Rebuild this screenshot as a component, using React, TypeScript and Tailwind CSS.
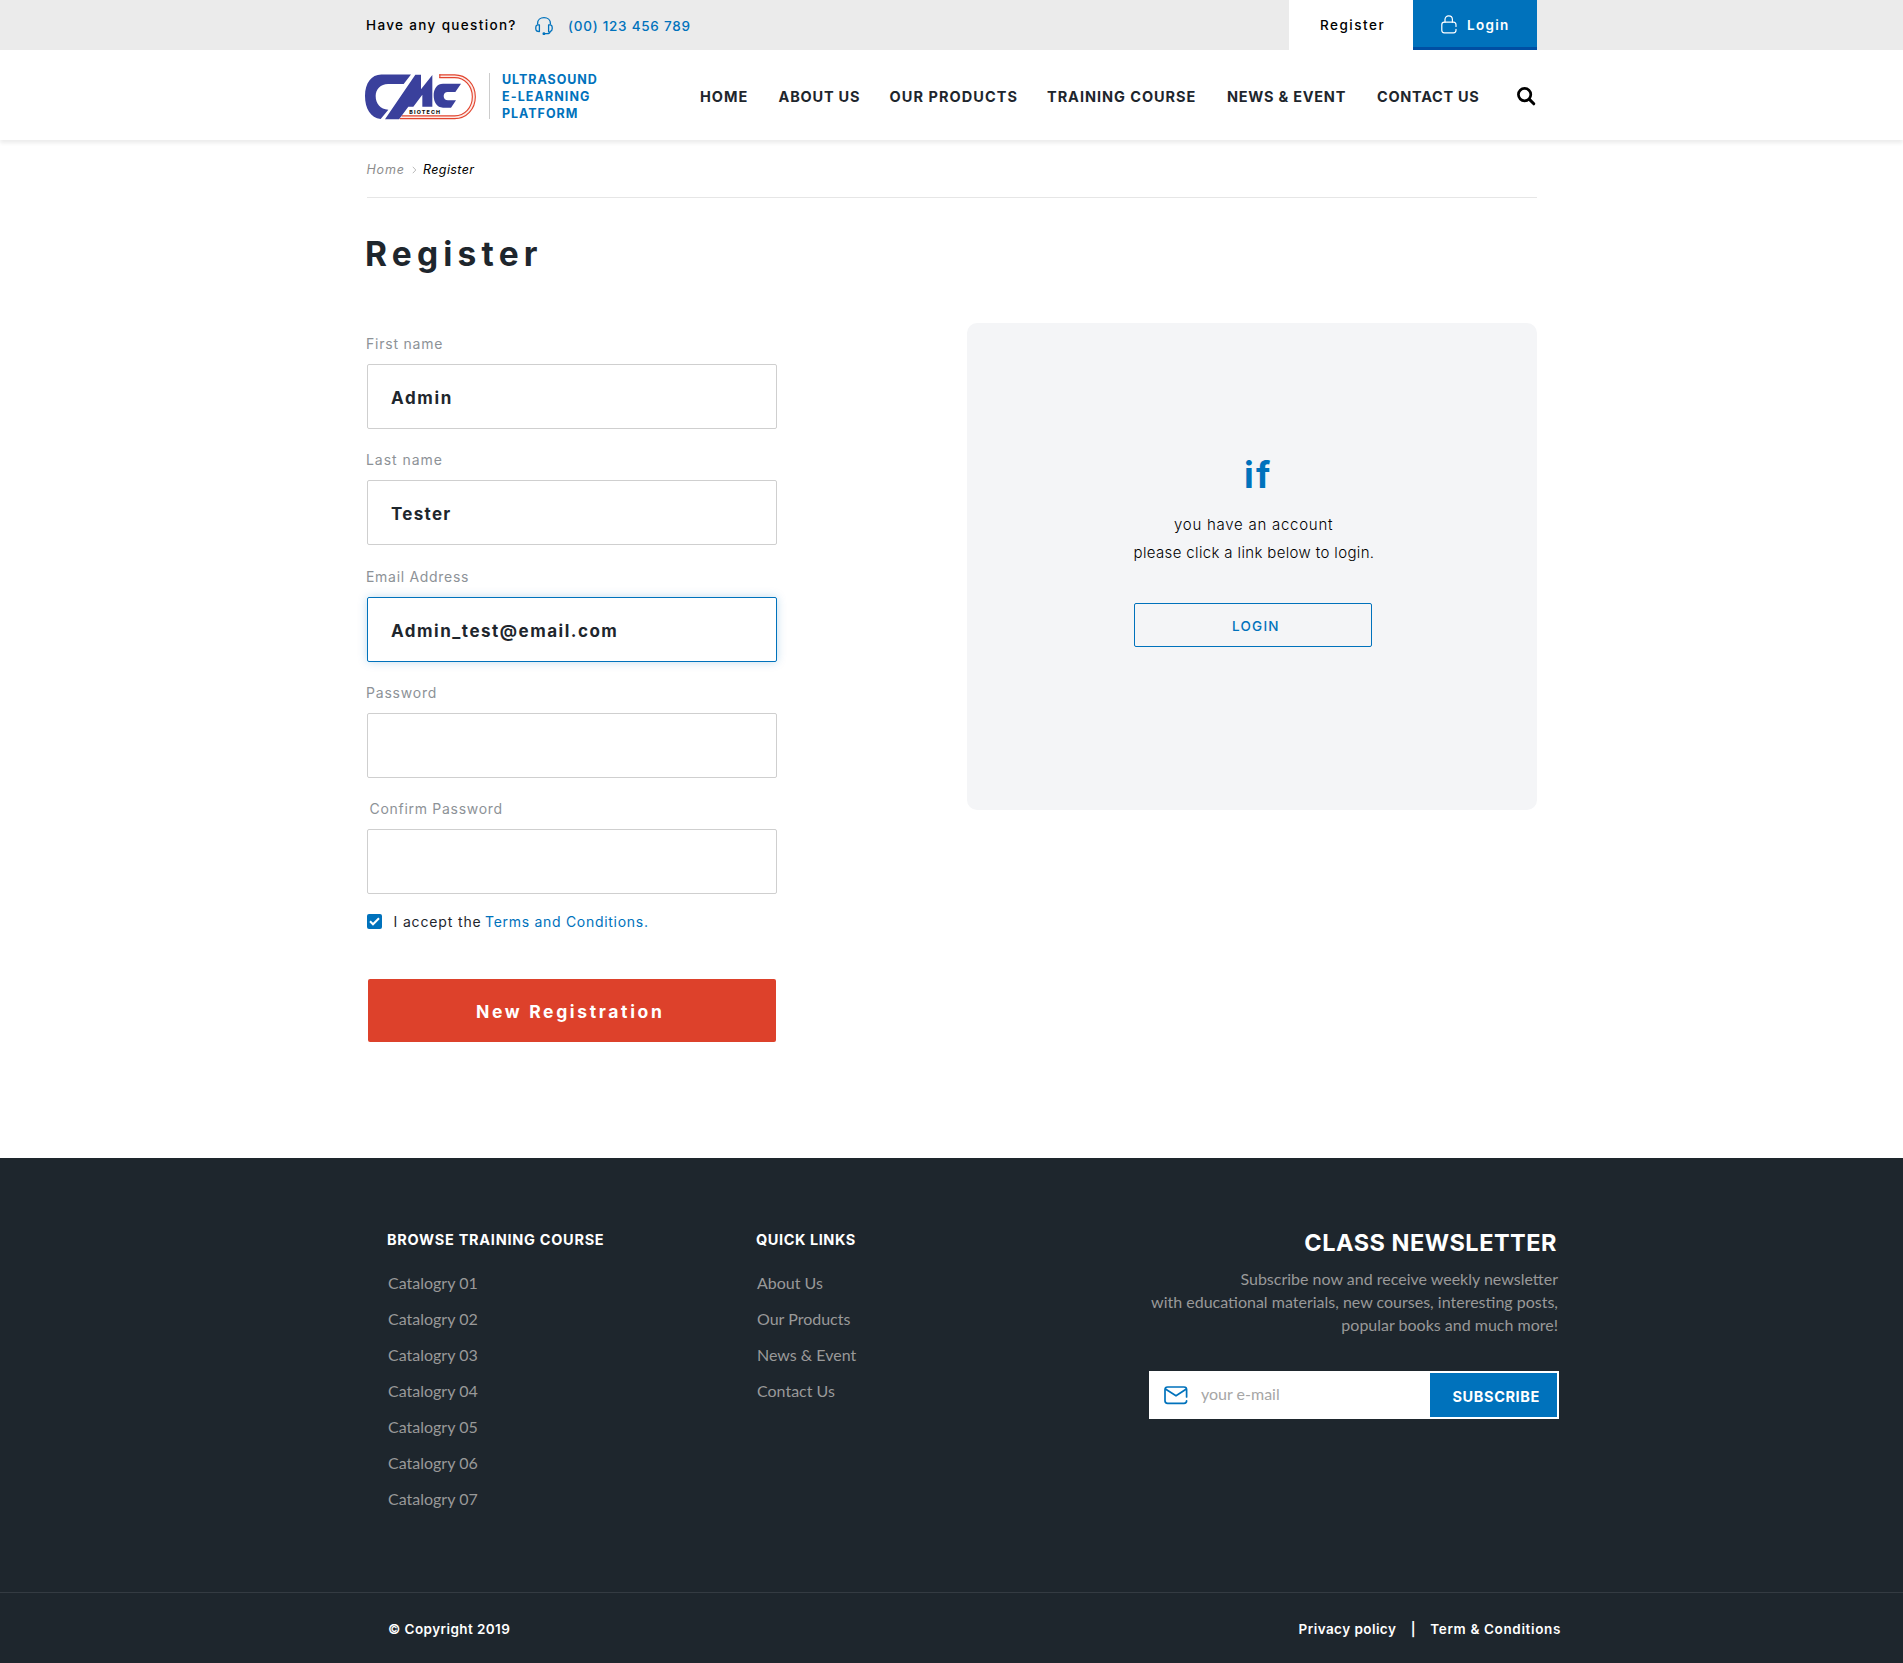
import type { ReactNode } from "react";

const navItems = [
  { label: "HOME", className: "tracking-[1px]" },
  { label: "ABOUT US", className: "tracking-[0.8px]" },
  { label: "OUR PRODUCTS", className: "tracking-[1.06px]" },
  { label: "TRAINING COURSE", className: "tracking-[0.96px]" },
  { label: "NEWS & EVENT", className: "tracking-[0.75px]" },
  { label: "CONTACT US", className: "tracking-[0.7px]" },
];

const categories = ["01", "02", "03", "04", "05", "06", "07"];
const quickLinks = ["About Us", "Our Products", "News & Event", "Contact Us"];

function HeadsetIcon() {
  return (
    <svg width="18" height="18" viewBox="0 0 18 18" fill="none" stroke="#0072bc" strokeWidth="1.3" strokeLinecap="round" strokeLinejoin="round">
      <path d="M2.600 7V6.400C2.600 3.100 5.300.7 9 .7s6.400 2.400 6.400 5.700V7" />
      <path d="M4.400 8v6.600C2 14.600.8 13.500.8 11.700v-1.200C.8 8.600 2 7.400 4.400 8Z" />
      <path d="M13.600 14.600V8c2.400-.6 3.600.6 3.600 2.500v1.200c0 1.300-.6 2.200-1.800 2.600-.5 1.600-1.600 2.400-3.200 2.400H9.400" />
      <circle cx="8.900" cy="16.700" r=".8" fill="#0072bc" />
    </svg>
  );
}

function LockIcon() {
  return (
    <svg width="16" height="19" viewBox="0 0 16 19" fill="none" stroke="#fff" strokeWidth="1.200" strokeLinecap="round" strokeLinejoin="round">
      <path d="M4 7.200V4.600C4 2.300 5.600.8 7.700.8s3.700 1.500 3.700 3.800v2.600" />
      <path d="M15 11.500V9.700c0-1.600-.9-2.500-2.500-2.500H3.300C1.700 7.200.8 8.100.8 9.700v5.600c0 1.600.9 2.500 2.500 2.500h9.200c1.600 0 2.500-.9 2.500-2.500v-1" />
    </svg>
  );
}

function MailIcon() {
  return (
    <svg width="24" height="19" viewBox="0 0 24 19" fill="none" stroke="#0072bc" strokeWidth="1.700" strokeLinecap="round" strokeLinejoin="round">
      <path d="M22.600 11V3.600C22.600 1.900 21.700 1 20 1H3.600C1.900 1 1 1.900 1 3.600v11.200c0 1.700.9 2.600 2.600 2.600H20c1.700 0 2.600-.9 2.600-2.600" />
      <path d="M1.800 3.300 12 9.800l10-6.500" />
    </svg>
  );
}

function SearchIcon() {
  return (
    <svg width="19" height="19" viewBox="0 0 19 19" fill="none" stroke="#000" strokeLinecap="round">
      <circle cx="7.600" cy="7.600" r="6.200" strokeWidth="2.700" />
      <path d="m12.400 12.400 4.400 4.400" strokeWidth="3" />
    </svg>
  );
}

function Logo() {
  return (
    <svg width="112" height="46" viewBox="15 26 336 138" className="shrink-0">
      <path d="M238 32.500H284C317 32.500 341 60 341 94.500S317 156 284 156H122" fill="none" stroke="#fdeae6" strokeWidth="8" />
      <g fill="none" stroke="#e2452f" strokeWidth="3.400">
        <path d="M238 28.500H284C319 28.500 346 57 346 94.500S319 160 284 160H119" />
        <path d="M238 37H284C314 37 337 62 337 94.500S314 151.500 284 151.500H125" />
        <path d="M239.500 27v11" />
      </g>
      <g fill="#3a409c">
        <path d="M153 27.500H64C34 27.500 15 53 15 92c0 37 17 66 47 69l23-28C61 132 47 115 47 92c0-21 15-36 37-36h47Z" />
        <path d="M75 162 166 28h17v44l34-43v95h-30V88l-27 36h-15L117 162Z" />
        <path d="M303 55h-54c-17 0-28 14-28 35 0 21 10 37 28 37h24l15-22h-24c-8 0-13-5-13-13 0-7 5-12 12-12h23Z" />
      </g>
      <text x="148" y="146.500" fontFamily="Inter, sans-serif" fontSize="16" fontWeight="800" textLength="92" fill="#111">
        BIOTECH
      </text>
    </svg>
  );
}

type FieldProps = { label: string; value?: ReactNode; className?: string; labelClass: string; focused?: boolean };

function Field({ label, value, className = "", labelClass, focused = false }: FieldProps) {
  return (
    <div className={className}>
      <div className={`h-[30px] text-[14px] leading-[20px] text-[#8d9297] ${labelClass}`}>{label}</div>
      <div
        className={`h-[65px] w-[410px] rounded-[2px] border bg-white pl-[23px] text-[17px] leading-[67px] font-bold text-[#1e262d] ${
          focused ? "border-[#0072bc] shadow-[0_0_10px_rgba(0,114,188,0.25)]" : "border-[#cfcfcf]"
        }`}
      >
        {value}
      </div>
    </div>
  );
}

export default function App() {
  return (
    <div className="w-[1903px] bg-white font-['Inter',sans-serif] whitespace-nowrap text-[#1e262d]">
      <div className="h-[50px] bg-[#ebebeb]">
        <div className="ml-[367px] flex h-full w-[1170px] text-[13.5px] leading-[50px] text-black">
          <span className="-ml-[1px] w-[169px] font-medium tracking-[1.35px]">Have any question?</span>
          <span className="mt-[17px] w-[33px]">
            <HeadsetIcon />
          </span>
          <span className="leading-[52px] font-medium tracking-[0.74px] text-[#0072bc]">(00) 123 456 789</span>
          <a className="ml-auto h-full w-[124px] bg-white pl-[31px] font-medium tracking-[1.5px]">Register</a>
          <a className="flex h-full w-[124px] border-b-[3px] border-[#004fa3] bg-[#0072bc] pl-[28px] font-semibold tracking-[1.3px] text-white">
            <span className="mt-[15px] w-[26px]">
              <LockIcon />
            </span>
            Login
          </a>
        </div>
      </div>

      <header className="h-[90px] bg-white shadow-[0_3px_4px_rgba(0,0,0,0.08)]">
        <div className="ml-[365px] flex h-full w-[1172px]">
          <div className="mt-[23.5px]">
            <Logo />
          </div>
          <div className="mt-[23px] ml-[12px] h-[46px] w-px bg-[#cccccc]" />
          <div className="mt-[21px] ml-[12px] w-[198px] text-[12.5px] leading-[17px] font-bold text-[#0072bc]">
            <div className="tracking-[0.95px]">ULTRASOUND</div>
            <div className="tracking-[1.1px]">E-LEARNING</div>
            <div className="tracking-[0.97px]">PLATFORM</div>
          </div>
          <nav className="grid grid-cols-[78.5px_111px_157.5px_180px_150px_140px] text-[14.5px] leading-[93px] font-bold">
            {navItems.map((n) => (
              <a key={n.label} className={n.className}>
                {n.label}
              </a>
            ))}
          </nav>
          <span className="mt-[37px]">
            <SearchIcon />
          </span>
        </div>
      </header>

      <main className="ml-[367px] w-[1170px] pb-[116px]">
        <div className="flex h-[58px] border-b border-[#e6e6e6] text-[12.5px] leading-[60px] italic">
          <span className="-ml-[0.5px] w-[45.5px] tracking-[0.8px] text-[#8d8d8d]">Home</span>
          <svg width="5" height="8" viewBox="0 0 5 8" fill="none" stroke="#bbb" className="mt-[26px]">
            <path d="m.8.8 3 3.200-3 3.200" />
          </svg>
          <span className="ml-[6px] tracking-[0.4px] text-black">Register</span>
        </div>
        <h1 className="mt-[34px] -ml-[2px] text-[33.5px] leading-[45px] font-bold tracking-[5.2px]">Register</h1>

        <div className="flex items-start justify-between">
          <form className="mt-[57px]">
            <Field label="First name" labelClass="-ml-[1px] tracking-[0.78px]" value={<span className="tracking-[1.65px]">Admin</span>} />
            <Field label="Last name" className="mt-[21px]" labelClass="-ml-[1px] tracking-[0.95px]" value={<span className="tracking-[1.3px]">Tester</span>} />
            <Field label="Email Address" className="mt-[22px]" labelClass="-ml-[1px] tracking-[0.7px]" focused value={<span className="tracking-[1.5px]">Admin_test@email.com</span>} />
            <Field label="Password" className="mt-[21px]" labelClass="-ml-[1px] tracking-[0.8px]" />
            <Field label="Confirm Password" className="mt-[21px]" labelClass="ml-[2.5px] tracking-[0.71px]" />
            <div className="mt-[20px] flex h-[15px] items-center text-[14px] leading-[16px]">
              <span className="flex size-[15px] items-center justify-center rounded-[2px] bg-[#0072bc]">
                <svg width="11" height="9" viewBox="0 0 11 9" fill="none" stroke="#fff" strokeWidth="2">
                  <path d="m1 4.300 3 3 6-6" />
                </svg>
              </span>
              <span className="ml-[11.5px] w-[91.5px] tracking-[0.85px]">I accept the</span>
              <a className="tracking-[0.71px] text-[#0072bc]">Terms and Conditions.</a>
            </div>
            <div className="mt-[50px] ml-[1px] h-[63px] w-[408px] rounded-[2px] bg-[#dd412b] pl-[108px] text-[17.5px] leading-[65px] font-bold tracking-[2.65px] text-white">
              New Registration
            </div>
          </form>

          <aside className="mt-[46px] h-[487px] w-[570px] rounded-[10px] bg-[#f4f5f7] pt-[132px]">
            <div className="pl-[277px] text-[36px] leading-[40px] font-bold tracking-[2.2px] text-[#0072bc]">if</div>
            <div className="mt-[16px] text-[15px] leading-[28px] font-light text-black">
              <div className="pl-[207px] tracking-[0.74px]">you have an account</div>
              <div className="pl-[166.5px] tracking-[0.36px]">please click a link below to login.</div>
            </div>
            <a className="mt-[36px] ml-[167px] block h-[44px] w-[238px] rounded-[2px] border border-[#0072bc] pl-[97px] text-[13.5px] leading-[44px] font-medium tracking-[1.25px] text-[#0072bc]">
              LOGIN
            </a>
          </aside>
        </div>
      </main>

      <footer className="bg-[#1e262d] text-white">
        <div className="ml-[388px] flex h-[434px] pt-[72px] font-['Lato',sans-serif] text-[16px] text-[#999999]">
          <div className="w-[369px]">
            <h2 className="-ml-[1px] font-['Inter',sans-serif] text-[14.5px] leading-[20px] font-bold tracking-[0.72px] text-white">BROWSE TRAINING COURSE</h2>
            <ul className="mt-[15px] leading-[36px]">
              {categories.map((c) => (
                <li key={c}>Catalogry {c}</li>
              ))}
            </ul>
          </div>
          <div className="w-[392px]">
            <h2 className="-ml-[1px] font-['Inter',sans-serif] text-[14.5px] leading-[20px] font-bold tracking-[0.56px] text-white">QUICK LINKS</h2>
            <ul className="mt-[15px] leading-[36px]">
              {quickLinks.map((q) => (
                <li key={q}>{q}</li>
              ))}
            </ul>
          </div>
          <div className="w-[410px] text-right">
            <h2 className="-mt-[2px] pr-[2px] font-['Inter',sans-serif] text-[23.5px] leading-[30px] font-bold tracking-[0.5px] text-white">CLASS NEWSLETTER</h2>
            <p className="mt-[9px] pr-[1px] leading-[23px]">
              Subscribe now and receive weekly newsletter
              <br />
              with educational materials, new courses, interesting posts,
              <br />
              popular books and much more!
            </p>
            <div className="mt-[35px] flex h-[48px] bg-white p-[2px] text-left">
              <span className="mt-[13px] ml-[13px] w-[37px]">
                <MailIcon />
              </span>
              <span className="w-[229px] leading-[42px] text-[#a6a6a6]">your e-mail</span>
              <span className="w-[127px] bg-[#0072bc] pl-[22.5px] font-['Inter',sans-serif] text-[14.5px] leading-[47px] font-bold tracking-[0.61px] text-white">SUBSCRIBE</span>
            </div>
          </div>
        </div>
        <div className="border-t border-[#343b42]">
          <div className="ml-[388px] flex h-[70px] w-[1173px] text-[13.5px] leading-[72px] font-semibold">
            <span className="tracking-[0.42px]">© Copyright 2019</span>
            <span className="ml-auto tracking-[0.44px]">Privacy policy</span>
            <span className="w-[34px] text-center">|</span>
            <span className="tracking-[0.64px]">Term &amp; Conditions</span>
          </div>
        </div>
      </footer>
    </div>
  );
}
